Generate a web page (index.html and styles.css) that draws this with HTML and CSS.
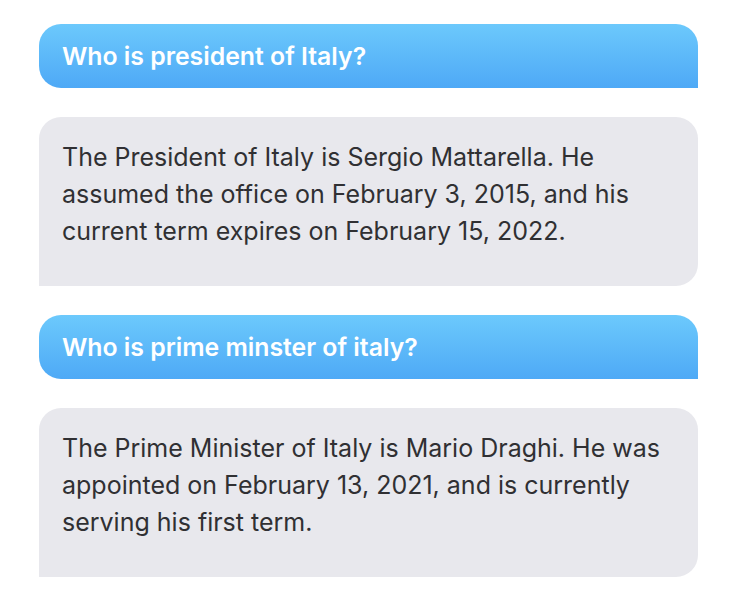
FILE: index.html
```html
<!DOCTYPE html>
<html>
<head>
<meta charset="utf-8">
<link rel="stylesheet" href="styles.css">
</head>
<body>
<div class="chat">
  <div class="msg q">Who is president of Italy?</div>
  <div class="msg a">The President of Italy is Sergio Mattarella. He assumed the office on February 3, 2015, and his current term expires on February 15, 2022.</div>
  <div class="msg q">Who is prime minster of italy?</div>
  <div class="msg a">The Prime Minister of Italy is Mario Draghi. He was appointed on February 13, 2021, and is currently serving his first term.</div>
</div>
</body>
</html>
```
FILE: styles.css
```css
html, body {
  margin: 0;
  background: #ffffff;
}
.chat {
  display: flex;
  flex-direction: column;
  gap: 29px;
  padding: 24px 32px 0 39px;
  font-family: Inter, "Noto Sans", sans-serif;
}
.msg {
  box-sizing: border-box;
}
.q {
  height: 64px;
  padding: 17px 23px 0 23px;
  background: linear-gradient(180deg, #6cc9fc 0%, #4ea9f6 100%);
  color: #ffffff;
  font-size: 24.8px;
  font-weight: 600;
  line-height: 30px;
  border-radius: 22px 22px 0 22px;
}
.a {
  height: 169px;
  padding: 22px 30px 0 23px;
  background: #e8e8ed;
  color: #303033;
  font-size: 25px;
  line-height: 37px;
  border-radius: 22px 22px 22px 0;
}
```
